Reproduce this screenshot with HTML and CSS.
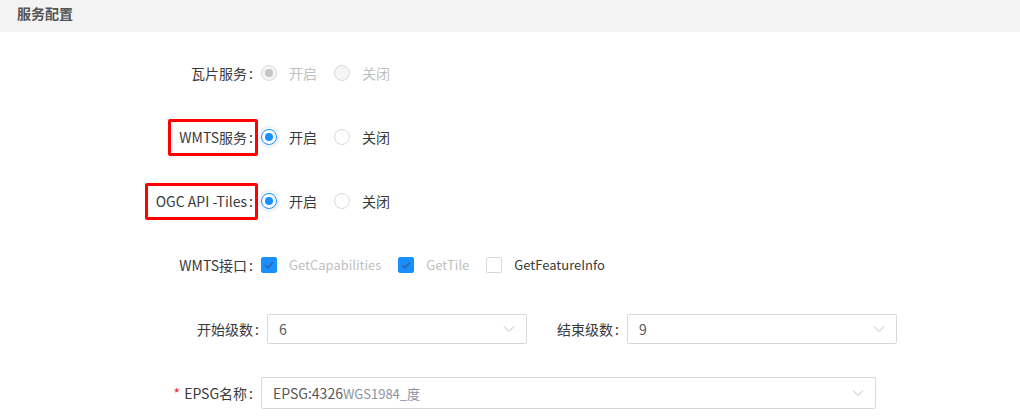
FILE: index.html
```html
<!DOCTYPE html>
<html lang="zh-CN">
<head>
    <meta charset="UTF-8">
    <title>服务配置</title>
    <link rel="stylesheet" href="styles.css">
</head>
<body>
    <div class="panel-head">服务配置</div>

    <div class="form">
        <div class="form-row">
            <label class="label"><span class="label-text">瓦片服务</span></label>
            <div class="radio-group">
                <span class="radio checked disabled"></span><span class="opt-text disabled">开启</span>
                <span class="radio disabled"></span><span class="opt-text disabled">关闭</span>
            </div>
        </div>

        <div class="form-row">
            <label class="label"><span class="label-text mark">WMTS服务</span></label>
            <div class="radio-group">
                <span class="radio checked"></span><span class="opt-text">开启</span>
                <span class="radio"></span><span class="opt-text">关闭</span>
            </div>
        </div>

        <div class="form-row">
            <label class="label"><span class="label-text mark">OGC API -Tiles</span></label>
            <div class="radio-group">
                <span class="radio checked"></span><span class="opt-text">开启</span>
                <span class="radio"></span><span class="opt-text">关闭</span>
            </div>
        </div>

        <div class="form-row">
            <label class="label"><span class="label-text">WMTS接口</span></label>
            <div class="check-group">
                <span class="checkbox checked">
                    <svg viewBox="0 0 16 16" width="16" height="16"><path d="M4.2 8.2 L7 10.8 L11.8 5.4" fill="none" stroke="#2c6db0" stroke-width="2"/></svg>
                </span><span class="opt-text latin disabled">GetCapabilities</span>
                <span class="checkbox checked">
                    <svg viewBox="0 0 16 16" width="16" height="16"><path d="M4.2 8.2 L7 10.8 L11.8 5.4" fill="none" stroke="#2c6db0" stroke-width="2"/></svg>
                </span><span class="opt-text latin disabled">GetTile</span>
                <span class="checkbox"></span><span class="opt-text latin">GetFeatureInfo</span>
            </div>
        </div>

        <div class="form-row">
            <label class="label label-wide"><span class="label-text">开始级数</span></label>
            <div class="select select-start">
                <span class="select-value">6</span>
                <svg class="arrow" viewBox="0 0 12 12" width="12" height="12"><path d="M1 3.5 L6 8.5 L11 3.5" fill="none" stroke="#bfbfbf" stroke-width="1"/></svg>
            </div>
            <label class="label label-second"><span class="label-text">结束级数</span></label>
            <div class="select select-end">
                <span class="select-value">9</span>
                <svg class="arrow" viewBox="0 0 12 12" width="12" height="12"><path d="M1 3.5 L6 8.5 L11 3.5" fill="none" stroke="#bfbfbf" stroke-width="1"/></svg>
            </div>
        </div>

        <div class="form-row">
            <label class="label"><span class="label-text required">EPSG名称</span></label>
            <div class="select select-epsg">
                <span class="select-value">EPSG:4326<span class="sub">WGS1984_度</span></span>
                <svg class="arrow" viewBox="0 0 12 12" width="12" height="12"><path d="M1 3.5 L6 8.5 L11 3.5" fill="none" stroke="#bfbfbf" stroke-width="1"/></svg>
            </div>
        </div>
    </div>
</body>
</html>
```

FILE: styles.css
```css
body {
    margin: 0;
    background: #fff;
    font-family: "Noto Sans CJK SC", "Noto Sans", sans-serif;
    font-size: 14px;
    color: #3a3a3a;
}

.panel-head {
    height: 32px;
    box-sizing: border-box;
    padding: 3px 0 0 17px;
    line-height: 20px;
    background: #f3f3f3;
    color: #555;
    font-weight: bold;
    font-size: 14px;
}

.form {
    padding-top: 25px;
    display: flex;
    flex-direction: column;
    gap: 32px;
}

.form-row {
    height: 32px;
    display: flex;
    align-items: center;
}

.label {
    width: 261px;
    flex: none;
    box-sizing: border-box;
    padding-right: 8px;
    text-align: right;
    line-height: 20px;
}

.label-wide {
    width: 267px;
}

.label-second {
    width: 100px;
}

.label-text {
    position: relative;
    display: inline-block;
}

.label-text::after {
    content: ":";
    margin-left: 2px;
}

.label-text.required::before {
    content: "*";
    color: #f5222d;
    margin-right: 4px;
}

.mark::before {
    content: "";
    position: absolute;
    top: -8px;
    bottom: -9px;
    left: -11px;
    right: -5px;
    border: 3px solid #ff0000;
    border-radius: 2px;
}

.radio-group,
.check-group {
    display: flex;
    align-items: center;
    line-height: 20px;
}

.radio {
    width: 16px;
    height: 16px;
    box-sizing: border-box;
    border: 1px solid #d9d9d9;
    border-radius: 50%;
    background: #fff;
    position: relative;
}

.radio.checked {
    border-color: #1890ff;
    box-shadow: 0 0 0 3px rgba(24, 144, 255, 0.08);
}

.radio.checked::after {
    content: "";
    position: absolute;
    left: 3px;
    top: 3px;
    width: 8px;
    height: 8px;
    border-radius: 50%;
    background: #1890ff;
}

.radio.disabled {
    background: #f5f5f5;
    border-color: #d9d9d9;
    box-shadow: none;
}

.radio.disabled::after {
    background: #c4c4c4;
}

.opt-text {
    margin: 0 17px 0 12px;
    color: #3a3a3a;
}

.opt-text.latin {
    font-size: 13px;
}

.opt-text.disabled {
    color: #bfbfbf;
}

.checkbox {
    width: 16px;
    height: 16px;
    box-sizing: border-box;
    border: 1px solid #d9d9d9;
    border-radius: 2px;
    background: #fff;
    display: flex;
}

.checkbox.checked {
    background: #1890ff;
    border-color: #1890ff;
}

.checkbox svg {
    margin: -1px;
}

.select {
    height: 30px;
    box-sizing: border-box;
    border: 1px solid #d9d9d9;
    border-radius: 2px;
    display: flex;
    align-items: center;
    justify-content: space-between;
    padding: 0 11px;
    color: #595959;
}

.select-start {
    width: 260px;
}

.select-end {
    width: 270px;
}

.select-epsg {
    width: 615px;
    height: 32px;
}

.select-value .sub {
    font-size: 13px;
    color: #8c90a0;
}

.arrow {
    flex: none;
}
```
